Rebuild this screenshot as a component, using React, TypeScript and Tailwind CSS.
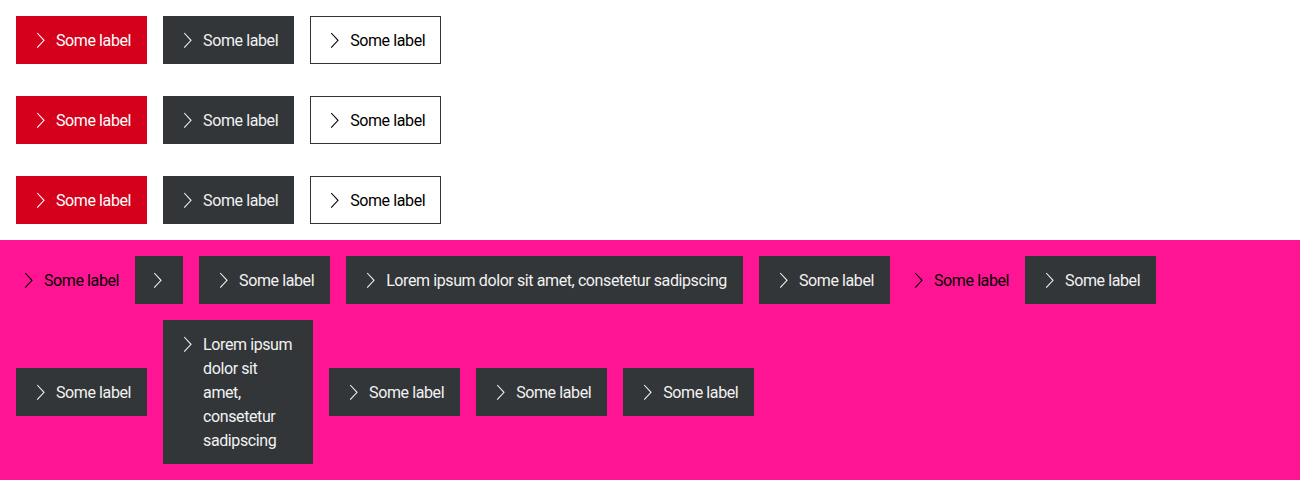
const Chevron = ({ className = "" }: { className?: string }) => (
  <svg
    viewBox="0 0 24 24"
    width="24"
    height="24"
    className={"shrink-0 " + className}
    fill="none"
    stroke="currentColor"
    strokeWidth="1.1"
  >
    <path d="M5.2 5 L12 12.3 L5.2 19.6" />
  </svg>
);

type Variant = "primary" | "secondary" | "tertiary" | "ghost" | "icon";

const Button = ({
  variant,
  label,
  className = "",
}: {
  variant: Variant;
  label?: string;
  className?: string;
}) => {
  const base = "flex items-start text-base leading-6 tracking-[-0.4px]";
  const text = <span className="pt-px -mb-px text-left">{label}</span>;
  if (variant === "ghost") {
    return (
      <button className={base + " pl-1 py-3 text-black"}>
        <Chevron />
        {text}
      </button>
    );
  }
  if (variant === "icon") {
    return (
      <button className="flex h-12 w-12 items-center justify-center bg-[#323639] text-[#f2f2f2]">
        <Chevron className="ml-[3px]" />
      </button>
    );
  }
  const styles = {
    primary: "bg-[#d5001c] text-white",
    secondary: "bg-[#323639] text-[#f2f2f2]",
    tertiary: "border border-[#323639] bg-white text-black px-[15px] py-[11px]",
  };
  return (
    <button
      className={
        base +
        " " +
        (variant === "tertiary" ? "" : "px-4 py-3 ") +
        styles[variant as "primary"] +
        " " +
        className
      }
    >
      <Chevron />
      {text}
    </button>
  );
};

export default function App() {
  const L = "Some label";
  return (
    <div className="w-[1300px] font-['Roboto',sans-serif]">
      <div className="bg-white">
        {[0, 1, 2].map((i) => (
          <div key={i} className="flex gap-4 p-4">
            <Button variant="primary" label={L} />
            <Button variant="secondary" label={L} />
            <Button variant="tertiary" label={L} />
          </div>
        ))}
      </div>
      <div className="bg-[#ff1493] pb-4">
        <div className="flex flex-wrap items-center gap-4 p-4 pb-0">
          <Button variant="ghost" label={L} />
          <Button variant="icon" />
          <Button variant="secondary" label={L} />
          <Button
            variant="secondary"
            label="Lorem ipsum dolor sit amet, consetetur sadipscing"
          />
          <Button variant="secondary" label={L} />
          <Button variant="ghost" label={L} />
          <Button variant="secondary" label={L} />
        </div>
        <div className="flex items-center gap-4 px-4 pt-4">
          <Button variant="secondary" label={L} />
          <Button
            variant="secondary"
            label="Lorem ipsum dolor sit amet, consetetur sadipscing"
            className="w-[150px]"
          />
          <Button variant="secondary" label={L} />
          <Button variant="secondary" label={L} />
          <Button variant="secondary" label={L} />
        </div>
      </div>
    </div>
  );
}
